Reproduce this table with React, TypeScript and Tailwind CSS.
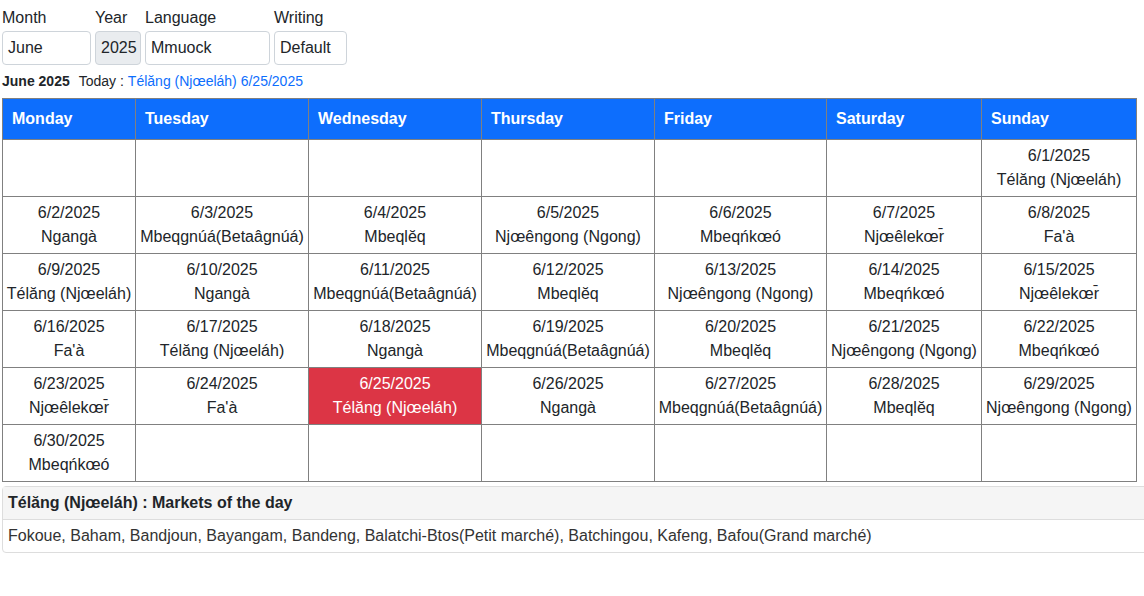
import React from "react";

const names = [
  "Télăng (Njœeláh)",
  "Ngangà",
  "Mbeqgnúá(Betaâgnúá)",
  "Mbeqlĕq",
  "Njœêngong (Ngong)",
  "Mbeqńkœó",
  "Njœêlekœr\u0304",
  "Fa'à",
];

const days = ["Monday", "Tuesday", "Wednesday", "Thursday", "Friday", "Saturday", "Sunday"];
const widths = [133, 173, 173, 173, 172, 155, 155];

export default function App() {
  // June 2025: starts Sunday (index 6)
  const cells: (number | null)[] = [];
  for (let i = 0; i < 6; i++) cells.push(null);
  for (let d = 1; d <= 30; d++) cells.push(d);
  while (cells.length % 7 !== 0) cells.push(null);
  const rows: (number | null)[][] = [];
  for (let i = 0; i < cells.length; i += 7) rows.push(cells.slice(i, i + 7));

  return (
    <div
      className="px-[2px] pt-[6px] text-[#212529] bg-white min-h-[596px]"
      style={{ fontFamily: '"Liberation Sans", Arial, sans-serif' }}
    >
      <div className="flex gap-[4px]">
        {[
          { label: "Month", value: "June", w: "w-[89px]", dis: false },
          { label: "Year", value: "2025", w: "w-[46px]", dis: true },
          { label: "Language", value: "Mmuock", w: "w-[125px]", dis: false },
          { label: "Writing", value: "Default", w: "w-[73px]", dis: false },
        ].map((f) => (
          <div key={f.label} className="flex flex-col">
            <div className="text-[16px] leading-[24px] mb-[1px]">{f.label}</div>
            <div
              className={`${f.w} h-[34px] border border-[#ced4da] rounded-[4px] px-[5px] flex items-center text-[16px] ${
                f.dis ? "bg-[#e9ecef]" : "bg-white"
              }`}
            >
              {f.value}
            </div>
          </div>
        ))}
      </div>
      <div className="flex items-center h-[33px] text-[14px]">
        <span className="font-bold">June 2025</span>
        <span className="ml-[9px]">Today : </span>
        <span className="ml-[4px] text-[#0d6efd]">Télăng (Njœeláh) 6/25/2025</span>
      </div>
      <table className="border-collapse table-fixed" style={{ width: 1135 }}>
        <colgroup>
          {widths.map((w, i) => (
            <col key={i} style={{ width: w }} />
          ))}
        </colgroup>
        <thead>
          <tr>
            {days.map((d) => (
              <th
                key={d}
                className="border border-[#808080] bg-[#0d6efd] text-white font-bold text-left text-[16px] h-[41px] px-[9px] align-middle"
              >
                {d}
              </th>
            ))}
          </tr>
        </thead>
        <tbody>
          {rows.map((r, ri) => (
            <tr key={ri}>
              {r.map((d, ci) => {
                const today = d === 25;
                return (
                  <td
                    key={ci}
                    className={`border border-[#808080] h-[57px] text-center align-middle text-[16px] leading-[24px] p-0 ${
                      today ? "bg-[#dc3545] text-white" : ""
                    }`}
                  >
                    {d !== null && (
                      <>
                        <div>6/{d}/2025</div>
                        <div className="whitespace-nowrap">{names[(d - 1) % 8]}</div>
                      </>
                    )}
                  </td>
                );
              })}
            </tr>
          ))}
        </tbody>
      </table>
      <div className="mt-[4px] border border-[#dddddd] rounded-[4px] w-[1150px]">
        <div className="bg-[#f5f5f5] border-b border-[#dddddd] h-[33px] flex items-center px-[5px] font-bold text-[16px] text-[#212529]">
          Télăng (Njœeláh) : Markets of the day
        </div>
        <div className="h-[32px] flex items-center px-[5px] text-[16px] text-[#333]">
          Fokoue, Baham, Bandjoun, Bayangam, Bandeng, Balatchi-Btos(Petit marché), Batchingou, Kafeng, Bafou(Grand marché)
        </div>
      </div>
    </div>
  );
}
